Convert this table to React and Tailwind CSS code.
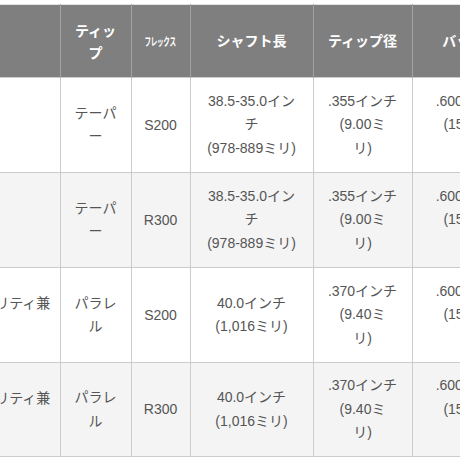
const rows = [
  { use: '', tip: ['テーパ', 'ー'], flex: 'S200', len: ['38.5-35.0イン', 'チ', '(978-889ミリ)'], dia: ['.355インチ', '(9.00ミ', 'リ)'], butt: ['.600インチ', '(15.24ミ', 'リ)'] },
  { use: '', tip: ['テーパ', 'ー'], flex: 'R300', len: ['38.5-35.0イン', 'チ', '(978-889ミリ)'], dia: ['.355インチ', '(9.00ミ', 'リ)'], butt: ['.600インチ', '(15.24ミ', 'リ)'] },
  { use: 'ユーティリティ兼', tip: ['パラレ', 'ル'], flex: 'S200', len: ['40.0インチ', '(1,016ミリ)'], dia: ['.370インチ', '(9.40ミ', 'リ)'], butt: ['.600インチ', '(15.24ミ', 'リ)'] },
  { use: 'ユーティリティ兼', tip: ['パラレ', 'ル'], flex: 'R300', len: ['40.0インチ', '(1,016ミリ)'], dia: ['.370インチ', '(9.40ミ', 'リ)'], butt: ['.600インチ', '(15.24ミ', 'リ)'] },
]

const Lines = ({ lines }) => (
  <div className="flex flex-col items-center leading-[23.5px]">
    {lines.map((l, i) => (
      <span key={i} className="whitespace-nowrap">{l}</span>
    ))}
  </div>
)

export default function App() {
  return (
    <div
      className="w-[460px] h-[460px] overflow-hidden bg-white pt-[4px]"
      style={{ fontFamily: '"Liberation Sans", "Noto Sans CJK JP", sans-serif' }}
    >
      <table className="table-fixed w-[588px] border-collapse ml-[-60px] text-[14px] text-[#555]">
        <colgroup>
          <col className="w-[120px]" />
          <col className="w-[71px]" />
          <col className="w-[59px]" />
          <col className="w-[123px]" />
          <col className="w-[99px]" />
          <col className="w-[116px]" />
        </colgroup>
        <thead>
          <tr className="h-[73px] bg-[#7f7f7f] text-white border-t border-[#e2e2e2]">
            <th className="border-r border-[#a3a3a3] p-0"></th>
            <th className="border-r border-[#a3a3a3] p-0 font-bold">
              <div className="flex flex-col items-center leading-[22px] pt-[1px]">
                <span>ティッ</span>
                <span>プ</span>
              </div>
            </th>
            <th className="border-r border-[#a3a3a3] p-0">
              <span className="inline-block text-[11px] font-bold scale-x-60 whitespace-nowrap tracking-[-0.5px]">フレックス</span>
            </th>
            <th className="border-r border-[#a3a3a3] p-0 font-bold">シャフト長</th>
            <th className="border-r border-[#a3a3a3] p-0 font-bold">ティップ径</th>
            <th className="p-0 font-bold whitespace-nowrap">バット径</th>
          </tr>
        </thead>
        <tbody>
          {rows.map((r, i) => (
            <tr
              key={i}
              className={`${i === 3 ? 'h-[94px]' : 'h-[95px]'} ${i % 2 === 1 ? 'bg-[#f4f4f4]' : 'bg-white'}`}
            >
              <td className="border border-l-0 border-[#cccccc] p-0 overflow-hidden">
                <div className="text-right pr-[13px] pb-[23px] whitespace-nowrap overflow-hidden">{r.use}</div>
              </td>
              <td className="border border-[#cccccc] p-0 text-center">
                <Lines lines={r.tip} />
              </td>
              <td className="border border-[#cccccc] p-0 text-center">{r.flex}</td>
              <td className="border border-[#cccccc] p-0 text-center">
                <Lines lines={r.len} />
              </td>
              <td className="border border-[#cccccc] p-0 text-center">
                <Lines lines={r.dia} />
              </td>
              <td className="border border-r-0 border-[#cccccc] p-0 text-center">
                <Lines lines={r.butt} />
              </td>
            </tr>
          ))}
        </tbody>
      </table>
    </div>
  )
}
